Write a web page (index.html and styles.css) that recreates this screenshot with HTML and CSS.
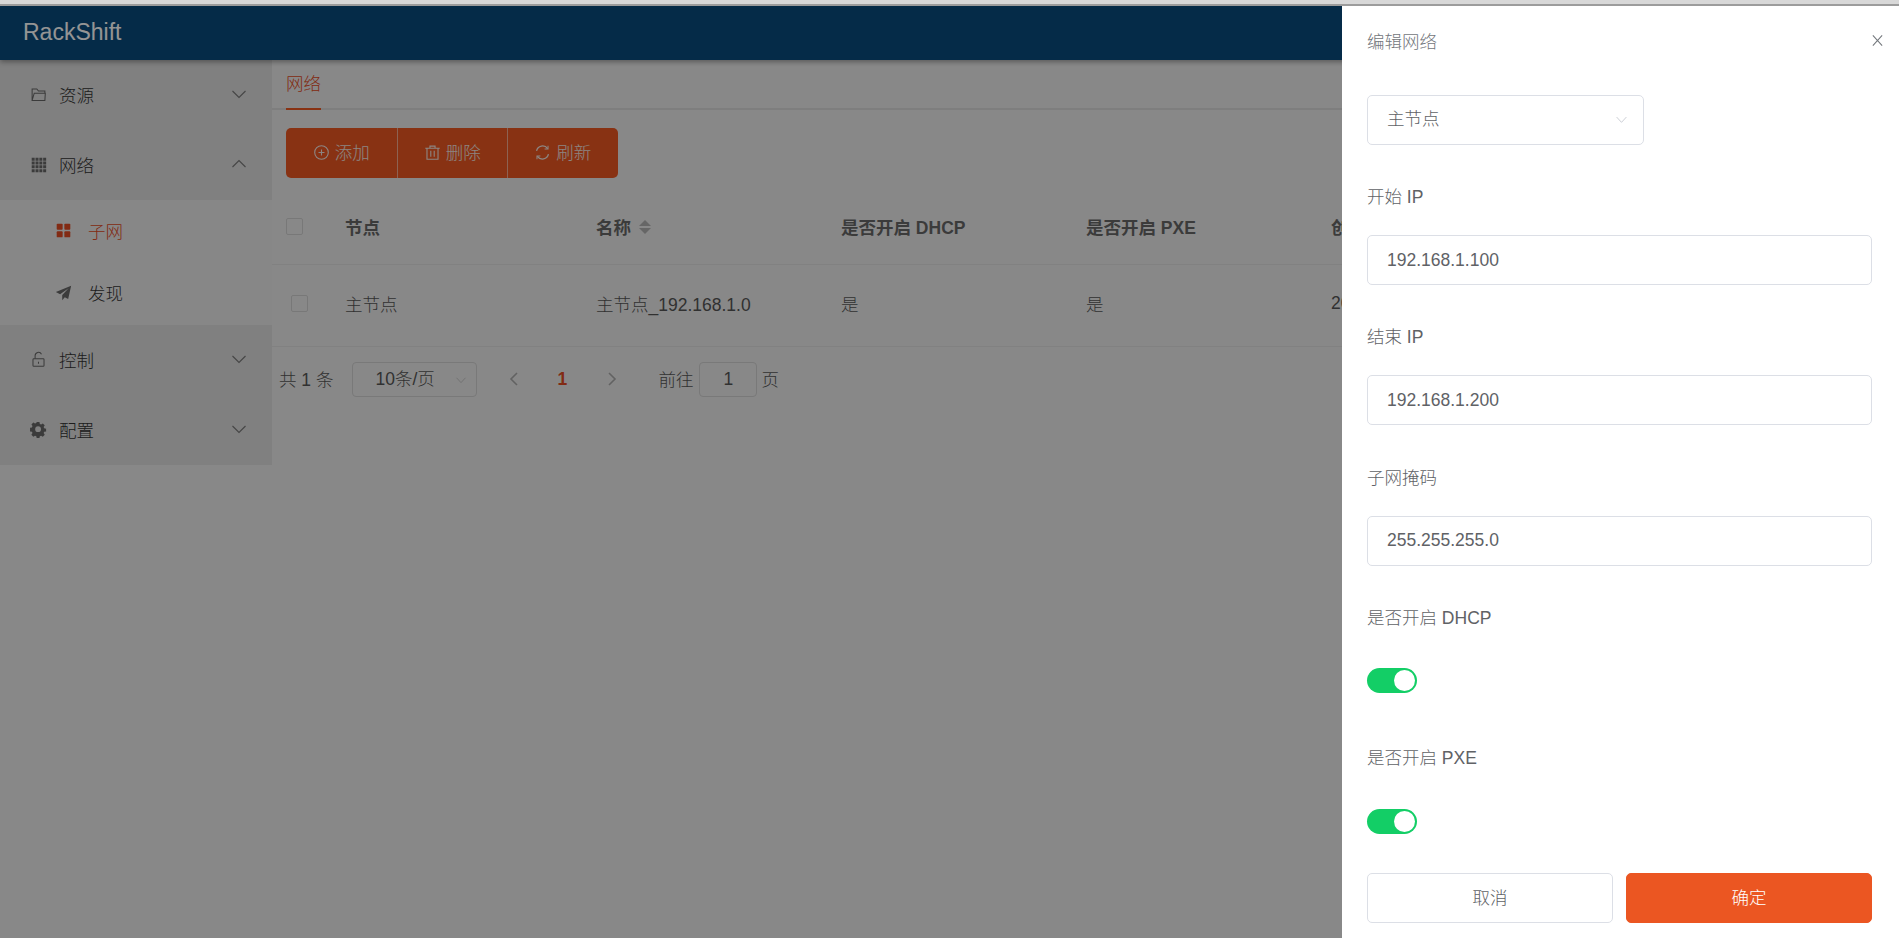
FILE: index.html
```html
<!DOCTYPE html>
<html lang="zh-CN">
<head>
    <meta charset="UTF-8">
    <meta name="viewport" content="width=device-width, initial-scale=1.0">
    <title>RackShift</title>
    <link rel="stylesheet" href="styles.css">
</head>
<body>
    <header class="topbar">RackShift</header>
    <div class="layout">
        <aside class="sidebar">
            <div class="menu-item">
                <svg class="menu-icon" viewBox="0 0 20 20" fill="none" stroke="currentColor" stroke-width="1.2"><path d="M2.500 17V3.500h5.500l2 2.500h7.500v2.500M2.500 17l2.500-8.500h13L17.500 17z"/></svg>
                <span>资源</span>
                <svg class="arrow" viewBox="0 0 16 16" fill="none" stroke="currentColor" stroke-width="1.1"><path d="M1.500 5l6.500 6.500L14.500 5"/></svg>
            </div>
            <div class="menu-item">
                <svg class="menu-icon" viewBox="0 0 20 20" fill="currentColor"><path d="M2 2h3.500v3.500H2zM6.500 2H10v3.500H6.500zM11 2h3.500v3.500H11zM15.500 2H19v3.500h-3.500zM2 6.500h3.500V10H2zM6.500 6.500H10V10H6.500zM11 6.500h3.500V10H11zM15.500 6.500H19V10h-3.500zM2 11h3.500v3.500H2zM6.500 11H10v3.500H6.500zM11 11h3.500v3.500H11zM15.500 11H19v3.500h-3.500zM2 15.500h3.500V19H2zM6.500 15.500H10V19H6.500zM11 15.500h3.500V19H11zM15.500 15.500H19V19h-3.500z"/></svg>
                <span>网络</span>
                <svg class="arrow" viewBox="0 0 16 16" fill="none" stroke="currentColor" stroke-width="1.1"><path d="M1.500 11L8 4.500l6.500 6.500"/></svg>
            </div>
            <div class="submenu">
                <div class="sub-item active">
                    <svg class="menu-icon" viewBox="0 0 20 20" fill="currentColor"><rect x="2" y="2" width="7" height="7" rx="1"/><rect x="11" y="2" width="7" height="7" rx="1"/><rect x="2" y="11" width="7" height="7" rx="1"/><rect x="11" y="11" width="7" height="7" rx="1"/></svg>
                    <span>子网</span>
                </div>
                <div class="sub-item">
                    <svg class="menu-icon" viewBox="0 0 20 20" fill="currentColor"><path d="M19 2L1 9.500l5 2.500L16 5 8.500 13v6l3-3.500 4 2z"/></svg>
                    <span>发现</span>
                </div>
            </div>
            <div class="menu-item">
                <svg class="menu-icon" viewBox="0 0 20 20" fill="none" stroke="currentColor" stroke-width="1.2"><rect x="3.500" y="9" width="13" height="9" rx="1"/><path d="M6 9V5.500a4 4 0 0 1 7.500-1.800M10 12.500v2.500"/></svg>
                <span>控制</span>
                <svg class="arrow" viewBox="0 0 16 16" fill="none" stroke="currentColor" stroke-width="1.1"><path d="M1.500 5l6.500 6.500L14.500 5"/></svg>
            </div>
            <div class="menu-item">
                <svg class="menu-icon gear" viewBox="0 0 20 20" fill="currentColor"><path fill-rule="evenodd" d="M8.200 1h3.600l.5 2.500 1.700.7 2.200-1.400 2.500 2.500-1.400 2.200.7 1.700 2.500.5v3.600l-2.500.5-.7 1.700 1.400 2.200-2.500 2.500-2.200-1.400-1.700.7-.5 2.500H8.200l-.5-2.500-1.700-.7-2.200 1.400-2.500-2.500 1.400-2.200-.7-1.700-2.500-.5V8.500l2.500-.5.7-1.700-1.400-2.200 2.500-2.500L6 3l1.700-.7z M10 6.500a3.800 3.800 0 1 0 0 7.600 3.800 3.800 0 0 0 0-7.600z" transform="translate(.5 .3) scale(.9)"/></svg>
                <span>配置</span>
                <svg class="arrow" viewBox="0 0 16 16" fill="none" stroke="currentColor" stroke-width="1.1"><path d="M1.500 5l6.500 6.500L14.500 5"/></svg>
            </div>
        </aside>

        <main class="content">
            <div class="tabs"><span class="tab">网络</span></div>
            <div class="toolbar">
                <button class="tool-btn">
                    <svg viewBox="0 0 20 20" fill="none" stroke="currentColor" stroke-width="1.300"><circle cx="10" cy="10" r="8"/><path d="M10 6.500v7M6.500 10h7"/></svg>添加
                </button>
                <button class="tool-btn">
                    <svg viewBox="0 0 20 20" fill="none" stroke="currentColor" stroke-width="1.300"><path d="M1.500 5h17M7 5V2.500h6V5M3.500 5v13h13V5M8 8v7M12 8v7"/></svg>删除
                </button>
                <button class="tool-btn">
                    <svg viewBox="0 0 20 20" fill="none" stroke="currentColor" stroke-width="1.500"><path d="M3 8a7.200 7.200 0 0 1 13-2.500M17 12a7.200 7.200 0 0 1-13 2.500"/><path d="M16.500 2v4h-4M3.500 18v-4h4" stroke-width="1.200"/></svg>刷新
                </button>
            </div>

            <table class="grid">
                <thead>
                    <tr>
                        <th class="check-col"><span class="checkbox head-check"></span></th>
                        <th class="node-col">节点</th>
                        <th class="col">名称 <span class="sorter"><i class="up"></i><i class="down"></i></span></th>
                        <th class="col">是否开启 DHCP</th>
                        <th class="col">是否开启 PXE</th>
                        <th>创建时间</th>
                    </tr>
                </thead>
                <tbody>
                    <tr>
                        <td class="check-col"><span class="checkbox"></span></td>
                        <td>主节点</td>
                        <td>主节点_192.168.1.0</td>
                        <td>是</td>
                        <td>是</td>
                        <td>2020-09-01</td>
                    </tr>
                </tbody>
            </table>

            <div class="pager">
                <span class="total">共 1 条</span>
                <div class="page-size">10条/页
                    <svg class="size-arrow" viewBox="0 0 16 16" fill="none" stroke="currentColor" stroke-width="1.200"><path d="M2 5l6 6.500L14 5"/></svg>
                </div>
                <svg class="page-arrow" viewBox="0 0 12 16" fill="none" stroke="currentColor" stroke-width="1.600"><path d="M9 2L3 8l6 6"/></svg>
                <span class="page-num">1</span>
                <svg class="page-arrow" viewBox="0 0 12 16" fill="none" stroke="currentColor" stroke-width="1.600"><path d="M3 2l6 6-6 6"/></svg>
                <span class="jump">前往</span>
                <span class="jump-box">1</span>
                <span class="jump">页</span>
            </div>
        </main>
    </div>

    <div class="overlay"></div>

    <aside class="drawer">
        <div class="drawer-head">
            <span>编辑网络</span>
            <svg class="close" viewBox="0 0 14 14" fill="none" stroke="currentColor" stroke-width="1.100"><path d="M2 1.500l10 11M12 1.500l-10 11"/></svg>
        </div>
        <div class="field-select">主节点
            <svg class="select-arrow" viewBox="0 0 16 16" fill="none" stroke="currentColor" stroke-width="1"><path d="M2 5l6 6.500L14 5"/></svg>
        </div>
        <div class="field">
            <label>开始 IP</label>
            <input type="text" value="192.168.1.100">
        </div>
        <div class="field">
            <label>结束 IP</label>
            <input type="text" value="192.168.1.200">
        </div>
        <div class="field">
            <label>子网掩码</label>
            <input type="text" value="255.255.255.0">
        </div>
        <div class="field">
            <label>是否开启 DHCP</label>
            <div class="switch-row"><span class="switch"></span></div>
        </div>
        <div class="field">
            <label>是否开启 PXE</label>
            <div class="switch-row"><span class="switch"></span></div>
        </div>
        <div class="drawer-foot">
            <button class="btn">取消</button>
            <button class="btn primary">确定</button>
        </div>
    </aside>
</body>
</html>
```
FILE: styles.css
```css
* {
    box-sizing: border-box;
}
html, body {
    height: 100%;
}
body {
    margin: 0;
    overflow: hidden;
    padding-top: 4px;
    background-color: #ebebeb;
    color: #444;
    font-family: "Liberation Sans", "Noto Sans CJK SC", sans-serif;
    font-size: 17.5px;
    font-weight: 300;
}
/* thin light edge along the very top of the window */
body::before {
    content: "";
    position: fixed;
    top: 0;
    left: 0;
    right: 0;
    height: 4px;
    background-color: #d8d8d8;
    border-bottom: 2px solid #9c9c9c;
    z-index: 1;
}
.topbar {
    height: 56px;
    padding-left: 23px;
    background-color: #0a4a7c;
    color: #fff;
    font-size: 23px;
    line-height: 56px;
    box-shadow: 0 2px 5px rgba(0, 0, 0, 0.35);
    position: relative;
}
.layout {
    display: flex;
}
.sidebar {
    width: 272px;
    flex-shrink: 0;
    background-color: #dcdcdc;
}
.menu-item {
    display: flex;
    align-items: center;
    height: 70px;
    padding: 0 25px 2px 30px;
    color: #333;
}
.menu-item span {
    margin-left: 12px;
    flex: 1;
}
.menu-icon {
    width: 17px;
    height: 17px;
    color: #666;
    flex-shrink: 0;
}
.arrow {
    width: 16px;
    height: 16px;
    color: #777;
}
.submenu {
    background-color: #e9e9e9;
}
.sub-item {
    display: flex;
    align-items: center;
    height: 62.5px;
    padding: 0 0 2px 55px;
    color: #333;
}
.sub-item span {
    margin-left: 16px;
}
.sub-item.active, .sub-item.active .menu-icon {
    color: #e04a24;
}
.content {
    flex: 1;
    min-width: 0;
}
.tabs {
    height: 50px;
    border-bottom: 2px solid #d9d9d9;
    padding-left: 14px;
}
.tab {
    display: inline-block;
    height: 50px;
    line-height: 48px;
    color: #e04a24;
    border-bottom: 2px solid #eb5622;
}
.toolbar {
    display: flex;
    margin: 18px 0 0 14px;
}
.tool-btn {
    display: flex;
    align-items: center;
    justify-content: center;
    width: 110.5px;
    height: 50px;
    padding: 0 0 3px;
    border: none;
    border-left: 1px solid #f3a98e;
    background-color: #eb5622;
    color: #f2e6e0;
    font: inherit;
}
.tool-btn:first-child {
    border-left: none;
    border-radius: 5px 0 0 5px;
}
.tool-btn:last-child {
    border-radius: 0 5px 5px 0;
}
.tool-btn svg {
    width: 17px;
    height: 17px;
    margin: 2px 5px 0 0;
}
.grid {
    width: 100%;
    margin-top: 10px;
    border-collapse: collapse;
    table-layout: fixed;
}
.grid th, .grid td {
    padding: 0;
    text-align: left;
    border-bottom: 1px solid #dedede;
    font-weight: 300;
    white-space: nowrap;
}
.grid th {
    height: 76px;
    padding-top: 2px;
    color: #666;
    font-weight: 700;
}
.grid td {
    height: 82px;
    padding-bottom: 4px;
    color: #555;
}
.check-col {
    width: 73px;
}
.node-col {
    width: 251px;
}
.col {
    width: 245px;
}
.checkbox {
    display: block;
    width: 17px;
    height: 17px;
    margin-left: 19px;
    border: 1px solid #cfcfcf;
    border-radius: 2px;
}
.head-check {
    margin-left: 14px;
}
.sorter {
    display: inline-block;
    width: 12px;
    height: 16px;
    vertical-align: -2px;
    margin-left: 3px;
}
.sorter i {
    display: block;
    width: 0;
    height: 0;
    border-left: 6px solid transparent;
    border-right: 6px solid transparent;
}
.sorter .up {
    border-bottom: 6px solid #b0b0b0;
    margin-bottom: 2px;
}
.sorter .down {
    border-top: 6px solid #b0b0b0;
}
.pager {
    display: flex;
    align-items: center;
    height: 35px;
    margin: 15px 0 0 7px;
    color: #555;
}
.total {
    margin-right: 19px;
    padding-bottom: 2px;
}
.page-size {
    position: relative;
    width: 125px;
    height: 35px;
    line-height: 32px;
    padding-left: 22px;
    border: 1px solid #d0d0d0;
    border-radius: 4px;
}
.size-arrow {
    position: absolute;
    right: 9px;
    top: 11px;
    width: 12px;
    height: 12px;
    color: #c0c0c0;
}
.page-arrow {
    width: 12px;
    height: 16px;
    margin-left: 31px;
    color: #aaa;
}
.page-num {
    width: 12px;
    margin: 0 7px 0 36px;
    color: #e04a24;
    font-weight: 700;
    text-align: center;
}
.jump {
    margin-left: 40px;
    padding-bottom: 2px;
}
.jump-box {
    width: 58px;
    height: 35px;
    line-height: 32px;
    margin: 0 4px 0 6px;
    border: 1px solid #d0d0d0;
    border-radius: 4px;
    text-align: center;
}
.jump-box + .jump {
    margin-left: 0;
}
.overlay {
    position: fixed;
    top: 0;
    left: 0;
    right: 0;
    bottom: 0;
    background-color: rgba(0, 0, 0, 0.42);
}
.drawer {
    position: fixed;
    top: 4px;
    right: 0;
    bottom: 0;
    width: 557px;
    padding: 0 27px 0 25px;
    background-color: #fff;
    color: #606266;
}
.drawer-head {
    display: flex;
    justify-content: space-between;
    align-items: center;
    height: 74px;
    padding-bottom: 2px;
    margin-bottom: 17px;
    color: #72767b;
}
.close {
    width: 13px;
    height: 13px;
    margin-right: -12px;
}
.field-select {
    position: relative;
    width: 277px;
    height: 50px;
    padding-left: 19px;
    line-height: 46px;
    border: 1px solid #dcdfe6;
    border-radius: 5px;
    margin-bottom: 40px;
}
.select-arrow {
    position: absolute;
    right: 15px;
    top: 17px;
    width: 13px;
    height: 13px;
    color: #c0c4cc;
}
.field {
    height: 140.3px;
}
.field label {
    display: block;
    height: 50px;
    line-height: 24px;
}
.field input {
    display: block;
    width: 100%;
    height: 50px;
    padding: 0 19px;
    border: 1px solid #dcdfe6;
    border-radius: 5px;
    color: #606266;
    font: inherit;
    font-weight: 400;
}
.switch-row {
    display: flex;
    align-items: center;
    height: 50px;
}
.switch {
    position: relative;
    width: 50px;
    height: 25px;
    border-radius: 13px;
    background-color: #13ce66;
}
.switch::after {
    content: "";
    position: absolute;
    top: 2px;
    right: 2px;
    width: 21px;
    height: 21px;
    border-radius: 50%;
    background-color: #fff;
}
.drawer-foot {
    display: flex;
    justify-content: space-between;
    margin-top: -13.5px;
}
.btn {
    width: 246px;
    height: 50px;
    padding: 0 0 3px;
    border: 1px solid #dcdfe6;
    border-radius: 5px;
    background-color: #fff;
    color: #606266;
    font: inherit;
}
.btn.primary {
    border-color: #eb5622;
    background-color: #eb5622;
    color: #fff;
}
```
